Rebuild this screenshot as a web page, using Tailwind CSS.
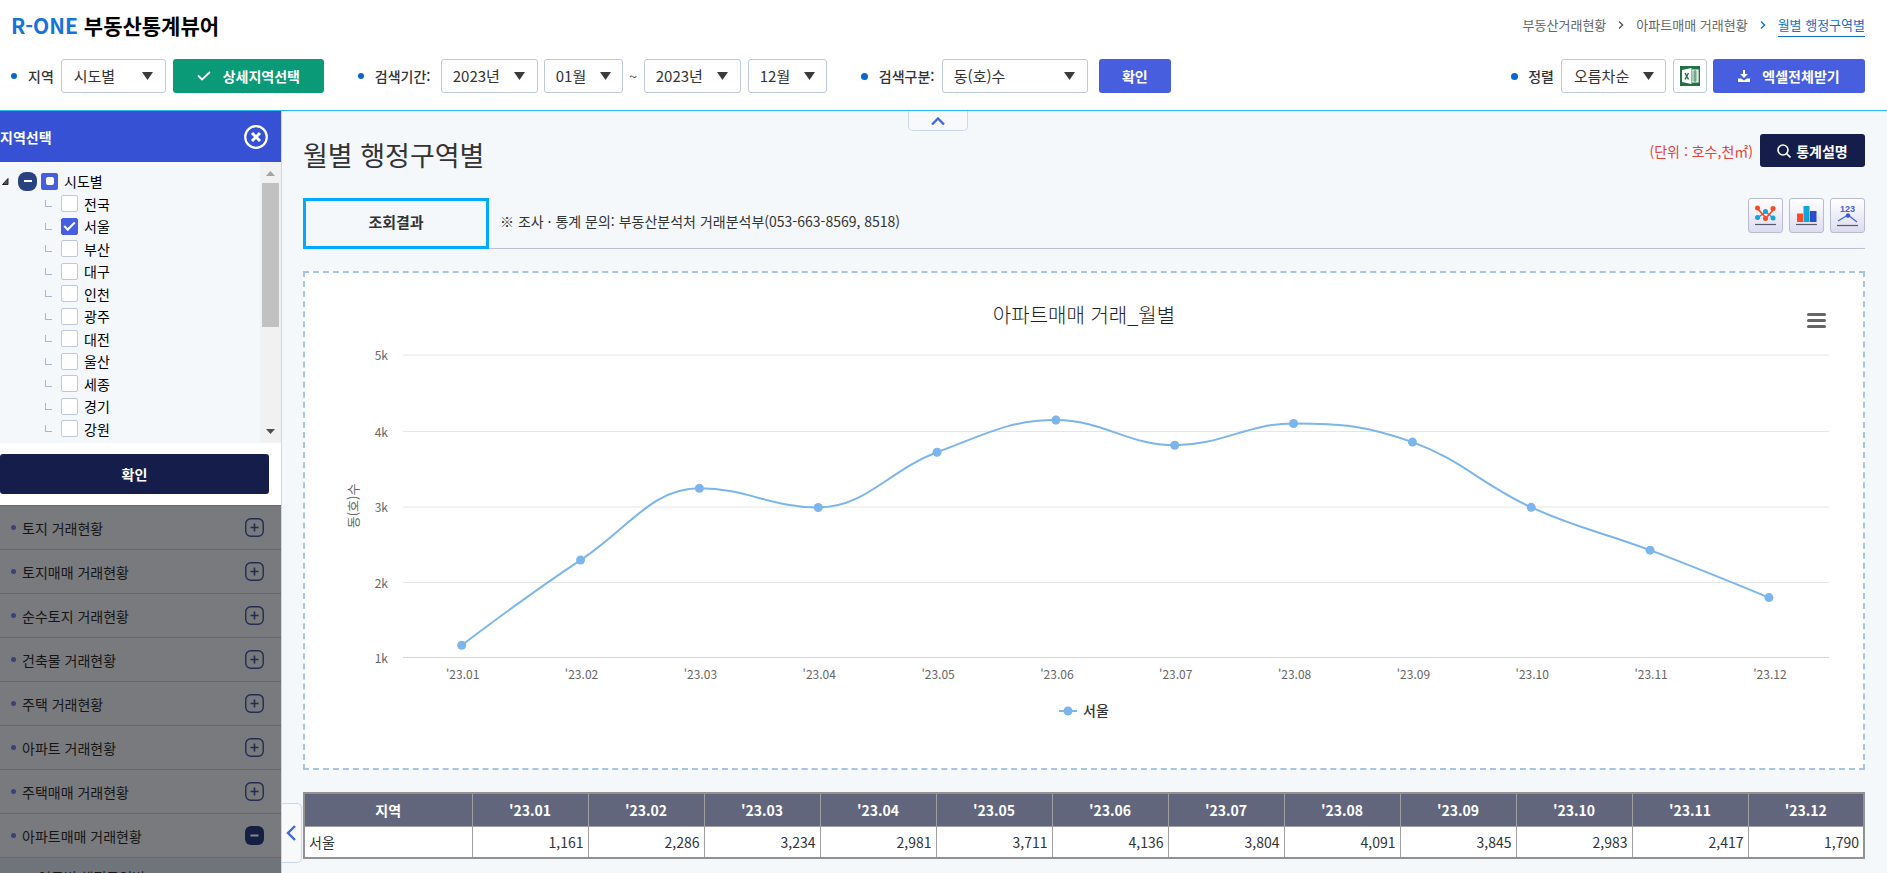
<!DOCTYPE html>
<html lang="ko">
<head>
<meta charset="utf-8">
<meta name="viewport" content="width=device-width, initial-scale=1">
<title>R-ONE 부동산통계뷰어</title>
<script src="https://cdn.jsdelivr.net/npm/@tailwindcss/browser@4"></script>
</head>
<body class="flex h-screen flex-col overflow-hidden bg-[#f4f8fb] font-['Noto_Sans_CJK_KR',sans-serif] text-sm text-[#333]">

<header class="shrink-0 border-b border-[#2bbdf2] bg-white pr-[22px] pl-[11px]">
  <div class="flex h-[50px] items-center justify-between">
    <h1 class="text-[21px] font-bold text-black"><a href="#"><span class="text-[#1573dc]">R-ONE</span> 부동산통계뷰어</a></h1>
    <nav aria-label="현재 위치" class="flex items-center gap-3 text-[13px] text-[#666]">
      <a href="#">부동산거래현황</a>
      <svg class="h-2 w-[6px]" viewBox="0 0 6 8" fill="none" stroke="#555" stroke-width="1.4"><path d="M1 .5 4.6 4 1 7.5"/></svg>
      <a href="#">아파트매매 거래현황</a>
      <svg class="h-2 w-[6px]" viewBox="0 0 6 8" fill="none" stroke="#1170c8" stroke-width="1.4"><path d="M1 .5 4.6 4 1 7.5"/></svg>
      <a href="#" class="border-b border-[#1170c8] leading-[22px] text-[#1170c8]">월별 행정구역별</a>
    </nav>
  </div>
  <form class="flex items-center pt-[9px] pb-[17px]" onsubmit="return false">
    <span class="size-[6px] rounded-full bg-[#0a67c9]"></span>
    <label for="area" class="mr-[7px] ml-[11px] font-medium">지역</label>
    <span class="relative mr-[7px] w-[105px]">
      <select id="area" class="h-[34px] w-full appearance-none rounded-[3px] border border-[#bccadb] bg-white pl-3 text-[15px]"><option>시도별</option></select>
      <svg class="pointer-events-none absolute top-[13px] right-[13px] h-2 w-[11px]" viewBox="0 0 11 8"><path d="M0 0h11L5.500 8z" fill="#3a3a3c"/></svg>
    </span>
    <button class="flex h-[34px] w-[151px] items-center justify-center gap-3 rounded-[3px] bg-[#0b9a78] font-bold text-white">
      <svg class="h-[10px] w-[14px]" viewBox="0 0 14 10" fill="none" stroke="#fff" stroke-width="1.8"><path d="M1 4.500 5 8.500 13 1"/></svg>상세지역선택
    </button>
    <span class="ml-[34px] size-[6px] rounded-full bg-[#0a67c9]"></span>
    <label for="y1" class="ml-[11px] w-[66px] font-medium">검색기간:</label>
    <span class="relative mr-[6px] w-[97px]">
      <select id="y1" class="h-[34px] w-full appearance-none rounded-[3px] border border-[#bccadb] bg-white pl-[11px] text-[15px]"><option>2023년</option></select>
      <svg class="pointer-events-none absolute top-[13px] right-[13px] h-2 w-[11px]" viewBox="0 0 11 8"><path d="M0 0h11L5.500 8z" fill="#3a3a3c"/></svg>
    </span>
    <span class="relative w-[79px]">
      <select aria-label="시작 월" class="h-[34px] w-full appearance-none rounded-[3px] border border-[#bccadb] bg-white pl-[11px] text-[15px]"><option>01월</option></select>
      <svg class="pointer-events-none absolute top-[13px] right-[12px] h-2 w-[11px]" viewBox="0 0 11 8"><path d="M0 0h11L5.500 8z" fill="#3a3a3c"/></svg>
    </span>
    <span class="w-[21px] text-center">~</span>
    <span class="relative mr-[7px] w-[97px]">
      <select aria-label="종료 연도" class="h-[34px] w-full appearance-none rounded-[3px] border border-[#bccadb] bg-white pl-[11px] text-[15px]"><option>2023년</option></select>
      <svg class="pointer-events-none absolute top-[13px] right-[13px] h-2 w-[11px]" viewBox="0 0 11 8"><path d="M0 0h11L5.500 8z" fill="#3a3a3c"/></svg>
    </span>
    <span class="relative w-[79px]">
      <select aria-label="종료 월" class="h-[34px] w-full appearance-none rounded-[3px] border border-[#bccadb] bg-white pl-[11px] text-[15px]"><option>12월</option></select>
      <svg class="pointer-events-none absolute top-[13px] right-[12px] h-2 w-[11px]" viewBox="0 0 11 8"><path d="M0 0h11L5.500 8z" fill="#3a3a3c"/></svg>
    </span>
    <span class="ml-[34px] size-[7px] rounded-full bg-[#0a67c9]"></span>
    <label for="kind" class="ml-[11px] w-[63px] font-medium">검색구분:</label>
    <span class="relative mr-[11px] w-[146px]">
      <select id="kind" class="h-[34px] w-full appearance-none rounded-[3px] border border-[#bccadb] bg-white pl-[11px] text-[15px]"><option>동(호)수</option></select>
      <svg class="pointer-events-none absolute top-[13px] right-[13px] h-2 w-[11px]" viewBox="0 0 11 8"><path d="M0 0h11L5.500 8z" fill="#3a3a3c"/></svg>
    </span>
    <button class="h-[34px] w-[72px] rounded-[3px] bg-[#475fde] font-bold text-white">확인</button>

    <span class="ml-auto size-[7px] rounded-full bg-[#0a67c9]"></span>
    <label for="sort" class="mr-[7px] ml-[10px] font-medium">정렬</label>
    <span class="relative mr-[7px] w-[105px]">
      <select id="sort" class="h-[34px] w-full appearance-none rounded-[3px] border border-[#bccadb] bg-white pl-3 text-[15px]"><option>오름차순</option></select>
      <svg class="pointer-events-none absolute top-[13px] right-[12px] h-2 w-[11px]" viewBox="0 0 11 8"><path d="M0 0h11L5.500 8z" fill="#3a3a3c"/></svg>
    </span>
    <button aria-label="엑셀 받기" class="mr-[6px] grid size-[34px] place-items-center rounded-[3px] border border-[#bccadb] bg-white">
      <svg class="size-5" viewBox="0 0 20 20"><path d="M0 0h20v20H0z" fill="#217346"/><path d="M2 4 11.500 2v16L2 16z" fill="#fff"/><path d="M12 4h6v12h-6" fill="#a9cbb8" stroke="#fff" stroke-width="1.200"/><path d="M15 4v12" stroke="#217346" stroke-width=".8"/><path d="m5 7 3.500 6.500M8.500 7 5 13.500" stroke="#217346" stroke-width="1.500"/></svg>
    </button>
    <button class="flex h-[34px] w-[152px] items-center justify-center gap-3 rounded-[3px] bg-[#475fde] font-bold text-white">
      <svg class="size-3" viewBox="0 0 12 12" fill="#fff"><path d="M5 0h2v4h2.800L6 8 2.200 4H5zM0 8.500h3.200L6 10.500l2.800-2H12V12H0z"/></svg>엑셀전체받기
    </button>
  </form>
</header>

<div class="flex min-h-0 flex-1">
  <aside class="flex w-[282px] shrink-0 flex-col overflow-hidden border-r border-[#c9d7ef] bg-white">
    <div class="flex h-[51px] shrink-0 items-center justify-between bg-[#3651d4] pr-[13px]">
      <h2 class="font-bold text-white">지역선택</h2>
      <button aria-label="닫기"><svg class="size-6" viewBox="0 0 24 24" fill="none" stroke="#fff"><circle cx="12" cy="12" r="10.800" stroke-width="2.200"/><path d="m8 8 8 8m0-8-8 8" stroke-width="3"/></svg></button>
    </div>
    <div class="flex h-[281px] shrink-0 bg-[#f4f8fb]">
      <ul id="tree" class="mt-2 flex h-[270px] flex-1 flex-col text-black">
        <li class="flex flex-1 items-center">
          <svg class="ml-[2px] size-[7px]" viewBox="0 0 7 7"><path d="M6 .5V6.500H.5z" fill="#555" stroke="#222"/></svg>
          <button aria-label="접기" class="mr-1 ml-[9px] grid size-[19px] place-items-center rounded-[8px] bg-[#2a427f]"><span class="h-[2px] w-2 bg-white"></span></button>
          <input id="all" type="checkbox" checked class="grid size-[17px] appearance-none place-items-center rounded-[2px] bg-[#475fde] after:size-2 after:rounded-[2px] after:bg-white after:content-['']">
          <label for="all" class="ml-[6px]">시도별</label>
        </li>
      </ul>
      <div class="flex w-[21px] flex-col items-center bg-[#f1f1f1] pt-[9px] pb-[9px]">
        <svg class="h-[5px] w-[9px]" viewBox="0 0 9 5"><path d="M0 5 4.500 0 9 5z" fill="#a3a3a3"/></svg>
        <div class="mt-[7px] h-[144px] w-[17px] bg-[#c1c1c1]"></div>
        <svg class="mt-auto h-[5px] w-[9px]" viewBox="0 0 9 5"><path d="M0 0h9L4.500 5z" fill="#505050"/></svg>
      </div>
    </div>
    <div class="shrink-0 py-[11px] pr-3">
      <button class="h-10 w-full rounded-[3px] bg-[#151d4b] font-bold text-white">확인</button>
    </div>
    <ul id="menu" class="flex-1 border-t border-[#636970] bg-[#797a7d] text-[#151515]"></ul>
  </aside>

  <main class="relative flex-1 pr-[22px] pl-[21px]">
    <button aria-label="검색조건 접기" class="absolute top-0 left-[626px] grid h-5 w-[60px] place-items-center rounded-b-[5px] border border-t-0 border-[#c9d7ef] bg-[#f8f9fb]">
      <svg class="h-2 w-[14px]" viewBox="0 0 14 8" fill="none" stroke="#4068e0" stroke-width="2.400"><path d="m1 7.500 6-6 6 6"/></svg>
    </button>
    <button aria-label="메뉴 접기" class="absolute bottom-[10px] left-0 grid h-[60px] w-5 place-items-center rounded-r-[5px] border border-l-0 border-[#c9d7ef] bg-[#f8f9fb] pr-[2px]">
      <svg class="h-4 w-[10px]" viewBox="0 0 10 16" fill="none" stroke="#4068e0" stroke-width="2.400"><path d="M9 1 2 8l7 7"/></svg>
    </button>

    <div class="flex h-[87px] items-start justify-between">
      <h2 class="mt-6 text-[27px] leading-10">월별 행정구역별</h2>
      <div class="mt-[23px] flex items-center gap-[7px]">
        <span class="text-[#e8413d]">(단위 : 호수,천㎡)</span>
        <button class="flex h-[33px] w-[105px] items-center justify-center gap-[5px] rounded-[3px] bg-[#151d4b] font-bold text-white">
          <svg class="size-[14px]" viewBox="0 0 14 14" fill="none" stroke="#fff" stroke-width="1.600"><circle cx="6" cy="6" r="5"/><path d="m9.500 9.500 4 4"/></svg>통계설명
        </button>
      </div>
    </div>

    <div class="flex h-[51px] items-stretch">
      <button class="w-[186px] border-3 border-[#00aaff] pb-1 text-[15px] font-bold">조회결과</button>
      <div class="flex flex-1 items-start justify-between border-b border-[#bfc0dc]">
        <p class="pl-[11px] leading-[46px]">※ 조사 · 통계 문의: 부동산분석처 거래분석부(053-663-8569, 8518)</p>
        <div class="flex gap-[6px]">
          <button aria-label="꺾은선 차트" class="grid size-[35px] place-items-center rounded-[3px] border border-[#b9bbd2] bg-linear-to-b from-white to-[#dcdcf0]">
            <svg class="h-[21px] w-[23px]" viewBox="0 0 23 21"><path d="m3 13 9-6 7 6" fill="none" stroke="#12a5dc" stroke-width="1.400"/><path d="m3 3 9 10 8-9" fill="none" stroke="#fb4a22" stroke-width="1.800"/><g fill="#12a5dc"><circle cx="3.500" cy="12.500" r="2.500"/><circle cx="11.500" cy="6.500" r="2.500"/><circle cx="19" cy="13" r="2.500"/></g><g fill="#fb4a22"><circle cx="3.500" cy="3" r="2.500"/><circle cx="11.500" cy="13.500" r="2.500"/><circle cx="19" cy="3.500" r="2.500"/></g><path d="M1 19.500h21" stroke="#55586a" stroke-width="1.200"/></svg>
          </button>
          <button aria-label="막대 차트" class="grid size-[35px] place-items-center rounded-[3px] border border-[#b9bbd2] bg-linear-to-b from-white to-[#dcdcf0]">
            <svg class="h-[21px] w-[23px]" viewBox="0 0 23 21"><path d="M2 8.500h6V17H2z" fill="#fb4a22"/><path d="M8.500 1h6v16h-6z" fill="#12a5dc"/><path d="M15 6h6.500v11H15z" fill="#2b4fcc"/><path d="M1 19.500h21" stroke="#55586a" stroke-width="1.200"/></svg>
          </button>
          <button aria-label="값 표시" class="grid size-[35px] place-items-center rounded-[3px] border border-[#b9bbd2] bg-linear-to-b from-white to-[#dcdcf0]">
            <svg class="h-[23px] w-[23px]" viewBox="0 0 23 23"><text x="11.500" y="8" text-anchor="middle" font-size="9" font-weight="700" fill="#4a62c8" font-family="Liberation Sans, sans-serif">123</text><path d="m2 17 10-6 9 7" fill="none" stroke="#4660e0" stroke-width="1.300"/><circle cx="12" cy="11.500" r="2.200" fill="#3a55dc"/><path d="M1 21.500h21" stroke="#55586a" stroke-width="1.200"/></svg>
          </button>
        </div>
      </div>
    </div>

    <section class="relative mt-[22px] border-2 border-dashed border-[#a5c4e6] bg-white">
      <svg viewBox="0 0 1558 495" class="block w-full" role="img" aria-label="아파트매매 거래 월별 차트">
        <text x="779" y="50" text-anchor="middle" class="fill-[#222] text-[20px] font-light">아파트매매 거래_월별</text>
        <g class="fill-[#666] text-[12px]" id="axis"></g>
        <text transform="translate(53 233) rotate(-90)" text-anchor="middle" class="fill-[#666] text-[13px]">동(호)수</text>
        <path id="line" fill="none" stroke="#7cb5ec" stroke-width="2" stroke-linejoin="round"/>
        <g id="dots" fill="#7cb5ec"></g>
        <path d="M754 438h18" stroke="#7cb5ec" stroke-width="2"/><circle cx="763" cy="438" r="4.500" fill="#7cb5ec"/>
        <text x="778" y="443" class="fill-[#333] text-[14px] font-medium">서울</text>
      </svg>
      <button aria-label="차트 메뉴" class="absolute top-[38px] right-[35px] grid h-[18px] w-[24px] place-items-center">
        <svg class="h-[15px] w-[19px]" viewBox="0 0 19 15" stroke="#666" stroke-width="3" stroke-linecap="round"><path d="M1.500 1.500h16M1.500 7.500h16M1.500 13.500h16"/></svg>
      </button>
    </section>

    <table class="mt-[22px] w-full table-fixed border-collapse border-2 border-[#929292] bg-white">
      <thead><tr id="head" class="h-[33px] bg-[#62667c] text-white"><th class="w-[168px] border border-[#a0a0a0] font-bold">지역</th></tr></thead>
      <tbody><tr id="row" class="h-8"><td class="border border-[#a0a0a0] px-1">서울</td></tr></tbody>
    </table>
  </main>
</div>

<script>
const byId = id => document.getElementById(id);

// Region tree
['전국','서울','부산','대구','인천','광주','대전','울산','세종','경기','강원'].forEach((name, i) => {
  byId('tree').insertAdjacentHTML('beforeend', `<li class="flex flex-1 items-center pl-[45px]">
    <span class="mr-[9px] size-[7px] border-b border-l border-[#aab4d8]"></span>
    <input id="r${i}" type="checkbox" ${name === '서울' ? 'checked' : ''} class="grid size-[17px] appearance-none place-items-center rounded-[2px] border border-[#bccadb] bg-white checked:border-[#475fde] checked:bg-[#475fde] checked:after:mb-[3px] checked:after:h-[6px] checked:after:w-[11px] checked:after:-rotate-45 checked:after:border-b-2 checked:after:border-l-2 checked:after:border-white checked:after:content-['']">
    <label for="r${i}" class="ml-[6px]">${name}</label></li>`);
});

// Statistics menu
const plus = '<svg class="size-[19px]" viewBox="0 0 19 19" fill="none" stroke="#222c50"><rect x=".75" y=".75" width="17.500" height="17.500" rx="5" stroke-width="1.400"/><path d="M9.500 5.500v8M5.500 9.500h8" stroke-width="1.600"/></svg>';
const minus = '<svg class="size-[19px]" viewBox="0 0 19 19"><rect width="19" height="19" rx="6" fill="#151f42"/><path d="M5.500 9.500h8" stroke="#858892" stroke-width="2"/></svg>';
['토지 거래현황','토지매매 거래현황','순수토지 거래현황','건축물 거래현황','주택 거래현황','아파트 거래현황','주택매매 거래현황','아파트매매 거래현황'].forEach((name, i) => {
  byId('menu').insertAdjacentHTML('beforeend', `<li class="border-b border-[#61676e] last:border-b-0"><button class="flex h-[43px] w-full items-center pr-[17px] pl-[11px]">
    <span class="mr-[6px] size-[5px] rounded-full bg-[#3b4179]"></span>${name}<span class="ml-auto">${i === 7 ? minus : plus}</span></button></li>`);
});
byId('menu').insertAdjacentHTML('beforeend', '<li class="bg-[#6f737a] pl-[38px] leading-[38px]"><a href="#">연도별 행정구역별</a></li>');

// Monthly transactions: axis, spline and table share the same data
const data = [1161,2286,3234,2981,3711,4136,3804,4091,3845,2983,2417,1790];
const label = i => "'23." + String(i + 1).padStart(2, '0');
let axis = '';
[5,4,3,2,1].forEach((k, i) => {
  const y = [82, 158.5, 234, 309.5, 384.5][i];
  axis += `<path d="M98 ${y}H1524" stroke="${k === 1 ? '#ccd6eb' : '#e6e6e6'}"/><text x="83" y="${y + 5}" text-anchor="end">${k}k</text>`;
});
const p = data.map((v, i) => [156.7 + 118.84 * i, 384.4 - (v - 1000) * 0.07567]);
let d = `M${p[0]}`, prevRight = p[0];
p.forEach(([x, y], i) => {
  axis += `<text x="${x + 1}" y="406" text-anchor="middle">${label(i)}</text>`;
  byId('dots').innerHTML += `<circle cx="${x}" cy="${y}" r="4.500"/>`;
  byId('head').insertAdjacentHTML('beforeend', `<th class="border border-[#a0a0a0] font-bold">${label(i)}</th>`);
  byId('row').insertAdjacentHTML('beforeend', `<td class="border border-[#a0a0a0] px-1 text-right">${data[i].toLocaleString('en-US')}</td>`);
  if (!i) return;
  const [lx, ly] = p[i - 1];
  let left = [x, y], right = [x, y];
  if (p[i + 1]) {
    const [nx, ny] = p[i + 1];
    left = [(1.5 * x + lx) / 2.5, (1.5 * y + ly) / 2.5];
    right = [(1.5 * x + nx) / 2.5, (1.5 * y + ny) / 2.5];
    const c = (right[1] - left[1]) * (right[0] - x) / (right[0] - left[0]) + y - right[1];
    left[1] += c; right[1] += c;
    if (left[1] > ly && left[1] > y) { left[1] = Math.max(ly, y); right[1] = 2 * y - left[1]; }
    else if (left[1] < ly && left[1] < y) { left[1] = Math.min(ly, y); right[1] = 2 * y - left[1]; }
    if (right[1] > ny && right[1] > y) { right[1] = Math.max(ny, y); left[1] = 2 * y - right[1]; }
    else if (right[1] < ny && right[1] < y) { right[1] = Math.min(ny, y); left[1] = 2 * y - right[1]; }
  }
  d += `C${prevRight} ${left} ${x},${y}`;
  prevRight = right;
});
byId('axis').innerHTML = axis;
byId('line').setAttribute('d', d);
</script>
</body>
</html>
